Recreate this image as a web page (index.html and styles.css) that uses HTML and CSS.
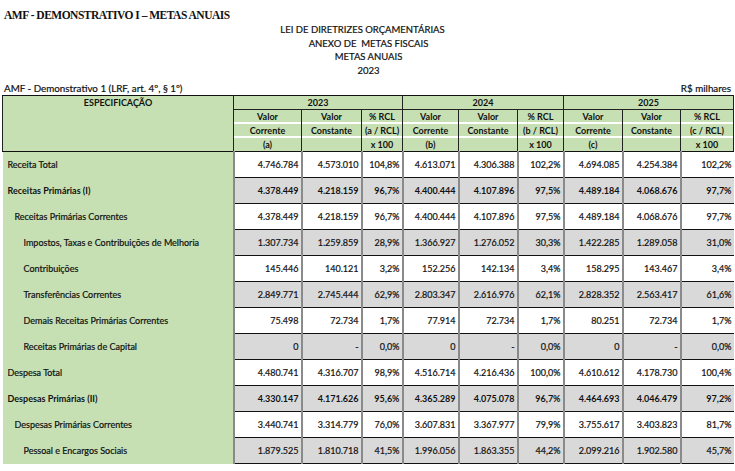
FILE: index.html
```html
<!DOCTYPE html>
<html lang="pt-BR">
<head>
<meta charset="utf-8">
<title>AMF - Demonstrativo I – Metas Anuais</title>
<link rel="stylesheet" href="styles.css">
</head>
<body>
<div class="page">
  <div class="doc-title">AMF - DEMONSTRATIVO I – METAS ANUAIS</div>
  <div class="heading">
    <div class="h-first">LEI DE DIRETRIZES ORÇAMENTÁRIAS</div>
    <div>ANEXO DE&nbsp; METAS FISCAIS</div>
    <div>METAS ANUAIS</div>
    <div>2023</div>
  </div>
  <div class="caption">
    <span>AMF - Demonstrativo 1 (LRF, art. 4º, § 1º)</span>
    <span>R$ milhares</span>
  </div>
  <table class="grid">
    <colgroup>
      <col class="c-spec">
      <col class="c68"><col class="c60"><col class="c41">
      <col class="c56"><col class="c59"><col class="c46">
      <col class="c59"><col class="c58"><col class="c53">
    </colgroup>
    <thead>
      <tr class="h-year">
        <th class="spec-head" rowspan="2">ESPECIFICAÇÃO</th>
        <th colspan="3" class="year">2023</th>
        <th colspan="3" class="year">2024</th>
        <th colspan="3" class="year">2025</th>
      </tr>
      <tr class="h-sub">
        <th><div class="ln">Valor</div><div class="ln">Corrente</div><div class="ln last">(a)</div></th>
        <th><div class="ln">Valor</div><div class="ln">Constante</div><div class="ln last"></div></th>
        <th><div class="ln">% RCL</div><div class="ln">(a / RCL)</div><div class="ln last">x 100</div></th>
        <th><div class="ln">Valor</div><div class="ln">Corrente</div><div class="ln last">(b)</div></th>
        <th><div class="ln">Valor</div><div class="ln">Constante</div><div class="ln last"></div></th>
        <th><div class="ln">% RCL</div><div class="ln">(b / RCL)</div><div class="ln last">x 100</div></th>
        <th><div class="ln">Valor</div><div class="ln">Corrente</div><div class="ln last">(c)</div></th>
        <th><div class="ln">Valor</div><div class="ln">Constante</div><div class="ln last"></div></th>
        <th><div class="ln">% RCL</div><div class="ln">(c / RCL)</div><div class="ln last">x 100</div></th>
      </tr>
    </thead>
    <tbody>
      <tr class="white"><td class="lbl l0">Receita Total</td><td>4.746.784</td><td>4.573.010</td><td>104,8%</td><td>4.613.071</td><td>4.306.388</td><td>102,2%</td><td>4.694.085</td><td>4.254.384</td><td>102,2%</td></tr>
      <tr class="gray bold"><td class="lbl l0">Receitas Primárias (I)</td><td>4.378.449</td><td>4.218.159</td><td>96,7%</td><td>4.400.444</td><td>4.107.896</td><td>97,5%</td><td>4.489.184</td><td>4.068.676</td><td>97,7%</td></tr>
      <tr class="white"><td class="lbl l1">Receitas Primárias Correntes</td><td>4.378.449</td><td>4.218.159</td><td>96,7%</td><td>4.400.444</td><td>4.107.896</td><td>97,5%</td><td>4.489.184</td><td>4.068.676</td><td>97,7%</td></tr>
      <tr class="gray"><td class="lbl l2">Impostos, Taxas e Contribuições de Melhoria</td><td>1.307.734</td><td>1.259.859</td><td>28,9%</td><td>1.366.927</td><td>1.276.052</td><td>30,3%</td><td>1.422.285</td><td>1.289.058</td><td>31,0%</td></tr>
      <tr class="white"><td class="lbl l2">Contribuições</td><td>145.446</td><td>140.121</td><td>3,2%</td><td>152.256</td><td>142.134</td><td>3,4%</td><td>158.295</td><td>143.467</td><td>3,4%</td></tr>
      <tr class="gray"><td class="lbl l2">Transferências Correntes</td><td>2.849.771</td><td>2.745.444</td><td>62,9%</td><td>2.803.347</td><td>2.616.976</td><td>62,1%</td><td>2.828.352</td><td>2.563.417</td><td>61,6%</td></tr>
      <tr class="white"><td class="lbl l2">Demais Receitas Primárias Correntes</td><td>75.498</td><td>72.734</td><td>1,7%</td><td>77.914</td><td>72.734</td><td>1,7%</td><td>80.251</td><td>72.734</td><td>1,7%</td></tr>
      <tr class="gray"><td class="lbl l2">Receitas Primárias de Capital</td><td>0</td><td>-</td><td>0,0%</td><td>0</td><td>-</td><td>0,0%</td><td>0</td><td>-</td><td>0,0%</td></tr>
      <tr class="white"><td class="lbl l0">Despesa Total</td><td>4.480.741</td><td>4.316.707</td><td>98,9%</td><td>4.516.714</td><td>4.216.436</td><td>100,0%</td><td>4.610.612</td><td>4.178.730</td><td>100,4%</td></tr>
      <tr class="gray bold"><td class="lbl l0">Despesas Primárias (II)</td><td>4.330.147</td><td>4.171.626</td><td>95,6%</td><td>4.365.289</td><td>4.075.078</td><td>96,7%</td><td>4.464.693</td><td>4.046.479</td><td>97,2%</td></tr>
      <tr class="white"><td class="lbl l1">Despesas Primárias Correntes</td><td>3.440.741</td><td>3.314.779</td><td>76,0%</td><td>3.607.831</td><td>3.367.977</td><td>79,9%</td><td>3.755.617</td><td>3.403.823</td><td>81,7%</td></tr>
      <tr class="gray"><td class="lbl l2">Pessoal e Encargos Sociais</td><td>1.879.525</td><td>1.810.718</td><td>41,5%</td><td>1.996.056</td><td>1.863.355</td><td>44,2%</td><td>2.099.216</td><td>1.902.580</td><td>45,7%</td></tr>
    </tbody>
  </table>
</div>
</body>
</html>
```

FILE: styles.css
```css
html, body {
  margin: 0;
  padding: 0;
  background: #ffffff;
}

.page {
  width: 735px;
  font-family: Lato, "Open Sans", sans-serif;
  font-size: 9px;
  color: #111;
  -webkit-text-stroke: 0.2px #111;
}

.doc-title {
  padding: 8px 0 0 4px;
  height: 15px;
  line-height: 14px;
  font-family: "Liberation Serif", serif;
  font-weight: bold;
  font-size: 11.5px;
  letter-spacing: -0.5px;
  -webkit-text-stroke: 0;
}

.heading {
  text-align: center;
  line-height: 13.5px;
  font-size: 9.5px;
  padding-left: 2px;
}

.heading .h-first {
  margin-right: 12px;
}

.caption {
  display: flex;
  justify-content: space-between;
  padding: 4px 4px 0 4px;
  height: 14px;
  line-height: 14px;
  font-size: 9.8px;
}

.grid {
  border-collapse: collapse;
  table-layout: fixed;
  width: 731px;
  margin-left: 2px;
}

.c-spec { width: 231px; }
.c68 { width: 68px; }
.c60 { width: 60px; }
.c41 { width: 41px; }
.c56 { width: 56px; }
.c59 { width: 59px; }
.c46 { width: 46px; }
.c58 { width: 58px; }
.c53 { width: 53px; }

.grid th {
  background: #c6e0b4;
  font-weight: bold;
  padding: 0;
  font-size: 9px;
  text-align: center;
  vertical-align: top;
  white-space: nowrap;
  border-left: 1px solid #222;
  border-right: 1px solid #222;
  -webkit-text-stroke: 0;
}

.grid thead tr:first-child th {
  border-top: 1px solid #111;
}

.grid th.spec-head {
  line-height: 13px;
  border-bottom: 1px solid #111;
}

.h-year th.year {
  height: 13px;
  line-height: 13px;
  border-bottom: 1px solid #222;
}

.h-sub th {
  border-bottom: 1px solid #111;
}

.ln {
  display: flex;
  justify-content: center;
  align-items: center;
  height: 12px;
  border-bottom: 2px solid #ffffff;
}

.ln.last {
  height: 13px;
  border-bottom: none;
}

.grid td {
  height: 25px;
  padding: 0 2px 0 0;
  text-align: right;
  vertical-align: middle;
  border-bottom: 1px solid #111;
  border-left: 2px solid #8a8a8a;
  white-space: nowrap;
}

.grid td.lbl {
  text-align: left;
  background: #c6e0b4;
  border-left: none;
  border-right: 1px solid #222;
  border-bottom: none;
}

.grid td.l0 { padding-left: 5px; }
.grid td.l1 { padding-left: 12px; }
.grid td.l2 { padding-left: 21px; }

tr.white td { background: #ffffff; }
tr.gray td { background: #d9d9d9; }
tr.white td.lbl, tr.gray td.lbl { background: #c6e0b4; }

tr.bold td {
  font-weight: bold;
  -webkit-text-stroke: 0;
}
```
